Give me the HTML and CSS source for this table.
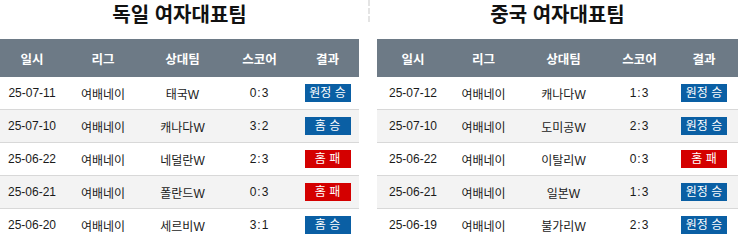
FILE: index.html
```html
<!DOCTYPE html>
<html lang="ko">
<head>
<meta charset="utf-8">
<link rel="stylesheet" href="styles.css">
</head>
<body>
<div class="wrap">
  <section class="panel panel-left">
    <h2 class="title">독일 여자대표팀</h2>
    <div class="grid head">
      <div>일시</div><div>리그</div><div>상대팀</div><div>스코어</div><div>결과</div>
    </div>
    <div class="grid row">
      <div>25-07-11</div><div>여배네이</div><div>태국W</div><div class="score">0:3</div><div><span class="badge win">원정 승</span></div>
    </div>
    <div class="grid row alt">
      <div>25-07-10</div><div>여배네이</div><div>캐나다W</div><div class="score">3:2</div><div><span class="badge win">홈 승</span></div>
    </div>
    <div class="grid row">
      <div>25-06-22</div><div>여배네이</div><div>네덜란W</div><div class="score">2:3</div><div><span class="badge lose">홈 패</span></div>
    </div>
    <div class="grid row alt">
      <div>25-06-21</div><div>여배네이</div><div>폴란드W</div><div class="score">0:3</div><div><span class="badge lose">홈 패</span></div>
    </div>
    <div class="grid row">
      <div>25-06-20</div><div>여배네이</div><div>세르비W</div><div class="score">3:1</div><div><span class="badge win">홈 승</span></div>
    </div>
  </section>
  <div class="divider"></div>
  <section class="panel panel-right">
    <h2 class="title">중국 여자대표팀</h2>
    <div class="grid head">
      <div>일시</div><div>리그</div><div>상대팀</div><div>스코어</div><div>결과</div>
    </div>
    <div class="grid row">
      <div>25-07-12</div><div>여배네이</div><div>캐나다W</div><div class="score">1:3</div><div><span class="badge win">원정 승</span></div>
    </div>
    <div class="grid row alt">
      <div>25-07-10</div><div>여배네이</div><div>도미공W</div><div class="score">2:3</div><div><span class="badge win">원정 승</span></div>
    </div>
    <div class="grid row">
      <div>25-06-22</div><div>여배네이</div><div>이탈리W</div><div class="score">0:3</div><div><span class="badge lose">홈 패</span></div>
    </div>
    <div class="grid row alt">
      <div>25-06-21</div><div>여배네이</div><div>일본W</div><div class="score">1:3</div><div><span class="badge win">원정 승</span></div>
    </div>
    <div class="grid row">
      <div>25-06-19</div><div>여배네이</div><div>불가리W</div><div class="score">2:3</div><div><span class="badge win">원정 승</span></div>
    </div>
  </section>
</div>
</body>
</html>
```

FILE: styles.css
```css
html, body {
  margin: 0;
  padding: 0;
  background: #fff;
}
body {
  font-family: "Liberation Sans", "Noto Sans CJK KR", sans-serif;
  font-size: 12px;
  color: #1a1a1a;
}
.wrap {
  display: flex;
  align-items: flex-start;
}
.panel-left {
  width: 359px;
}
.panel-right {
  width: 361px;
}
.divider {
  width: 0;
  height: 22px;
  border-left: 2px dashed #e4e4e4;
  margin: 0 7px 0 9px;
}
.title {
  margin: 0;
  height: 39px;
  line-height: 27px;
  text-align: center;
  font-family: "Noto Sans CJK KR", sans-serif;
  font-weight: 700;
  font-size: 20px;
  color: #111;
}
.grid {
  display: grid;
  align-items: center;
  text-align: center;
}
.panel-left .grid {
  grid-template-columns: 64px 78px 81px 73px 63px;
}
.panel-right .grid {
  grid-template-columns: 72px 69px 91px 61px 68px;
}
.head {
  height: 38px;
  background: #6d7a86;
  color: #fff;
  font-family: "Noto Sans CJK KR", sans-serif;
  font-weight: 700;
  font-size: 12.5px;
}
.row {
  height: 32px;
  border-bottom: 1px solid #d8d8d8;
}
.row.alt {
  background: #f3f3f3;
}
.score {
  letter-spacing: 1px;
}
.badge {
  display: inline-block;
  width: 46px;
  height: 18px;
  line-height: 18px;
  color: #fff;
  font-size: 12px;
  text-align: center;
  vertical-align: middle;
}
.badge.win {
  background: #0a5fa4;
}
.badge.lose {
  background: #d40000;
}
```
